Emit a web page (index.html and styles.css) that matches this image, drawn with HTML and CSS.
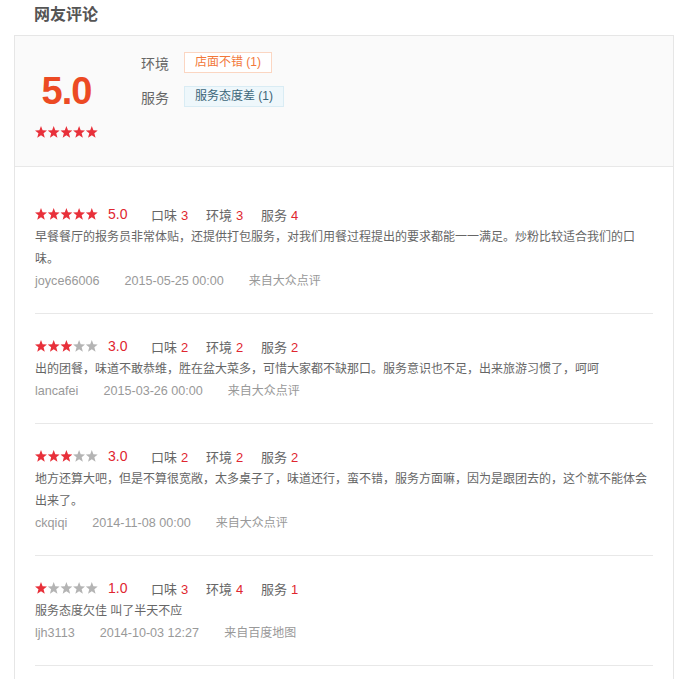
FILE: index.html
```html
<!DOCTYPE html>
<html lang="zh-CN">
<head>
<meta charset="utf-8">
<title>网友评论</title>
<link rel="stylesheet" href="styles.css">
</head>
<body>
<svg class="defs" width="0" height="0" aria-hidden="true">
  <symbol id="star" viewBox="0 0 12 12">
    <polygon points="6,0.1 7.6,4.3 12,4.5 8.55,7.3 9.75,11.7 6,9.2 2.25,11.7 3.45,7.3 0,4.5 4.4,4.3"/>
  </symbol>
</svg>
<div class="page">
  <h2 class="title">网友评论</h2>
  <div class="box">
    <div class="summary">
      <div class="score-col">
        <div class="big-score">5.0</div>
        <svg class="stars" width="63" height="12" viewBox="0 0 63 12">
          <use href="#star" x="0" width="12" height="12" class="on"/>
          <use href="#star" x="12.7" width="12" height="12" class="on"/>
          <use href="#star" x="25.4" width="12" height="12" class="on"/>
          <use href="#star" x="38.1" width="12" height="12" class="on"/>
          <use href="#star" x="50.8" width="12" height="12" class="on"/>
        </svg>
      </div>
      <div class="tags-col">
        <div class="tag-row"><span class="tag-label">环境</span><span class="tag tag-good">店面不错 (1)</span></div>
        <div class="tag-row"><span class="tag-label">服务</span><span class="tag tag-bad">服务态度差 (1)</span></div>
      </div>
    </div>
    <div class="list">
      <div class="review">
        <div class="rating">
          <svg class="stars" width="63" height="12" viewBox="0 0 63 12">
            <use href="#star" x="0" width="12" height="12" class="on"/>
            <use href="#star" x="12.7" width="12" height="12" class="on"/>
            <use href="#star" x="25.4" width="12" height="12" class="on"/>
            <use href="#star" x="38.1" width="12" height="12" class="on"/>
            <use href="#star" x="50.8" width="12" height="12" class="on"/>
          </svg>
          <span class="score">5.0</span>
          <span class="aspect">口味<em>3</em></span>
          <span class="aspect">环境<em>3</em></span>
          <span class="aspect">服务<em>4</em></span>
        </div>
        <p class="text">早餐餐厅的报务员非常体贴，还提供打包服务，对我们用餐过程提出的要求都能一一满足。炒粉比较适合我们的口味。</p>
        <div class="meta"><span class="user">joyce66006</span><span class="date">2015-05-25 00:00</span><span class="src">来自大众点评</span></div>
      </div>
      <div class="review">
        <div class="rating">
          <svg class="stars" width="63" height="12" viewBox="0 0 63 12">
            <use href="#star" x="0" width="12" height="12" class="on"/>
            <use href="#star" x="12.7" width="12" height="12" class="on"/>
            <use href="#star" x="25.4" width="12" height="12" class="on"/>
            <use href="#star" x="38.1" width="12" height="12" class="off"/>
            <use href="#star" x="50.8" width="12" height="12" class="off"/>
          </svg>
          <span class="score">3.0</span>
          <span class="aspect">口味<em>2</em></span>
          <span class="aspect">环境<em>2</em></span>
          <span class="aspect">服务<em>2</em></span>
        </div>
        <p class="text">出的团餐，味道不敢恭维，胜在盆大菜多，可惜大家都不缺那口。服务意识也不足，出来旅游习惯了，呵呵</p>
        <div class="meta"><span class="user">lancafei</span><span class="date">2015-03-26 00:00</span><span class="src">来自大众点评</span></div>
      </div>
      <div class="review">
        <div class="rating">
          <svg class="stars" width="63" height="12" viewBox="0 0 63 12">
            <use href="#star" x="0" width="12" height="12" class="on"/>
            <use href="#star" x="12.7" width="12" height="12" class="on"/>
            <use href="#star" x="25.4" width="12" height="12" class="on"/>
            <use href="#star" x="38.1" width="12" height="12" class="off"/>
            <use href="#star" x="50.8" width="12" height="12" class="off"/>
          </svg>
          <span class="score">3.0</span>
          <span class="aspect">口味<em>2</em></span>
          <span class="aspect">环境<em>2</em></span>
          <span class="aspect">服务<em>2</em></span>
        </div>
        <p class="text">地方还算大吧，但是不算很宽敞，太多桌子了，味道还行，蛮不错，服务方面嘛，因为是跟团去的，这个就不能体会出来了。</p>
        <div class="meta"><span class="user">ckqiqi</span><span class="date">2014-11-08 00:00</span><span class="src">来自大众点评</span></div>
      </div>
      <div class="review">
        <div class="rating">
          <svg class="stars" width="63" height="12" viewBox="0 0 63 12">
            <use href="#star" x="0" width="12" height="12" class="on"/>
            <use href="#star" x="12.7" width="12" height="12" class="off"/>
            <use href="#star" x="25.4" width="12" height="12" class="off"/>
            <use href="#star" x="38.1" width="12" height="12" class="off"/>
            <use href="#star" x="50.8" width="12" height="12" class="off"/>
          </svg>
          <span class="score">1.0</span>
          <span class="aspect">口味<em>3</em></span>
          <span class="aspect">环境<em>4</em></span>
          <span class="aspect">服务<em>1</em></span>
        </div>
        <p class="text">服务态度欠佳 叫了半天不应</p>
        <div class="meta"><span class="user">ljh3113</span><span class="date">2014-10-03 12:27</span><span class="src">来自百度地图</span></div>
      </div>
    </div>
  </div>
</div>
</body>
</html>
```
FILE: styles.css
```css
html, body {
  margin: 0;
  padding: 0;
  overflow: hidden;
  background: #fff;
}
body {
  font-family: "Liberation Sans", "Noto Sans CJK SC", sans-serif;
  color: #666;
}
.defs {
  position: absolute;
  width: 0;
  height: 0;
}
.page {
  padding: 0 14px;
}
.title {
  margin: 0 0 5px;
  padding-left: 20px;
  height: 30px;
  line-height: 30px;
  font-size: 16px;
  font-weight: bold;
  color: #555;
}
.box {
  border: 1px solid #e6e6e6;
}
.summary {
  display: flex;
  height: 130px;
  background: #fafafa;
  border-bottom: 1px solid #e8e8e8;
}
.score-col {
  width: 63px;
  margin-left: 20px;
  display: flex;
  flex-direction: column;
  align-items: center;
}
.big-score {
  margin-top: 33px;
  height: 44px;
  line-height: 44px;
  font-size: 38px;
  font-weight: bold;
  color: #ec4a23;
  letter-spacing: -1px;
}
.score-col .stars {
  margin-top: 13px;
}
.stars {
  display: block;
  flex: none;
}
.stars .on { fill: #e8303a; }
.stars .off { fill: #b4b4b4; }
.tags-col {
  margin-left: 43px;
  padding-top: 16px;
  display: flex;
  flex-direction: column;
  gap: 13px;
}
.tag-row {
  display: flex;
  align-items: center;
  height: 21px;
}
.tag-label {
  width: 28px;
  margin-right: 15px;
  font-size: 14px;
  color: #666;
}
.tag {
  height: 19px;
  line-height: 19px;
  padding: 0 10px;
  font-size: 12px;
  border: 1px solid;
}
.tag-good {
  color: #f2783a;
  background: #fff;
  border-color: #fbd6c2;
}
.tag-bad {
  color: #3c6679;
  background: #eef7fb;
  border-color: #d9ecf4;
}
.list {
  padding: 15px 20px 20px;
}
.review {
  padding: 20px 0 21px;
  border-bottom: 1px solid #e8e8e8;
}
.rating {
  display: flex;
  align-items: center;
  height: 24px;
}
.rating .stars {
  margin-right: 10px;
}
.score {
  width: 43px;
  font-size: 14px;
  color: #e0262f;
}
.aspect {
  width: 55px;
  font-size: 13px;
  color: #666;
}
.aspect em {
  font-style: normal;
  color: #e0262f;
  margin-left: 4px;
}
.text {
  margin: 0;
  font-size: 12px;
  line-height: 22px;
  color: #666;
}
.meta {
  display: flex;
  height: 22px;
  line-height: 22px;
  font-size: 12px;
  color: #999;
}
.user, .date {
  font-size: 12.6px;
  margin-right: 25px;
}
```
